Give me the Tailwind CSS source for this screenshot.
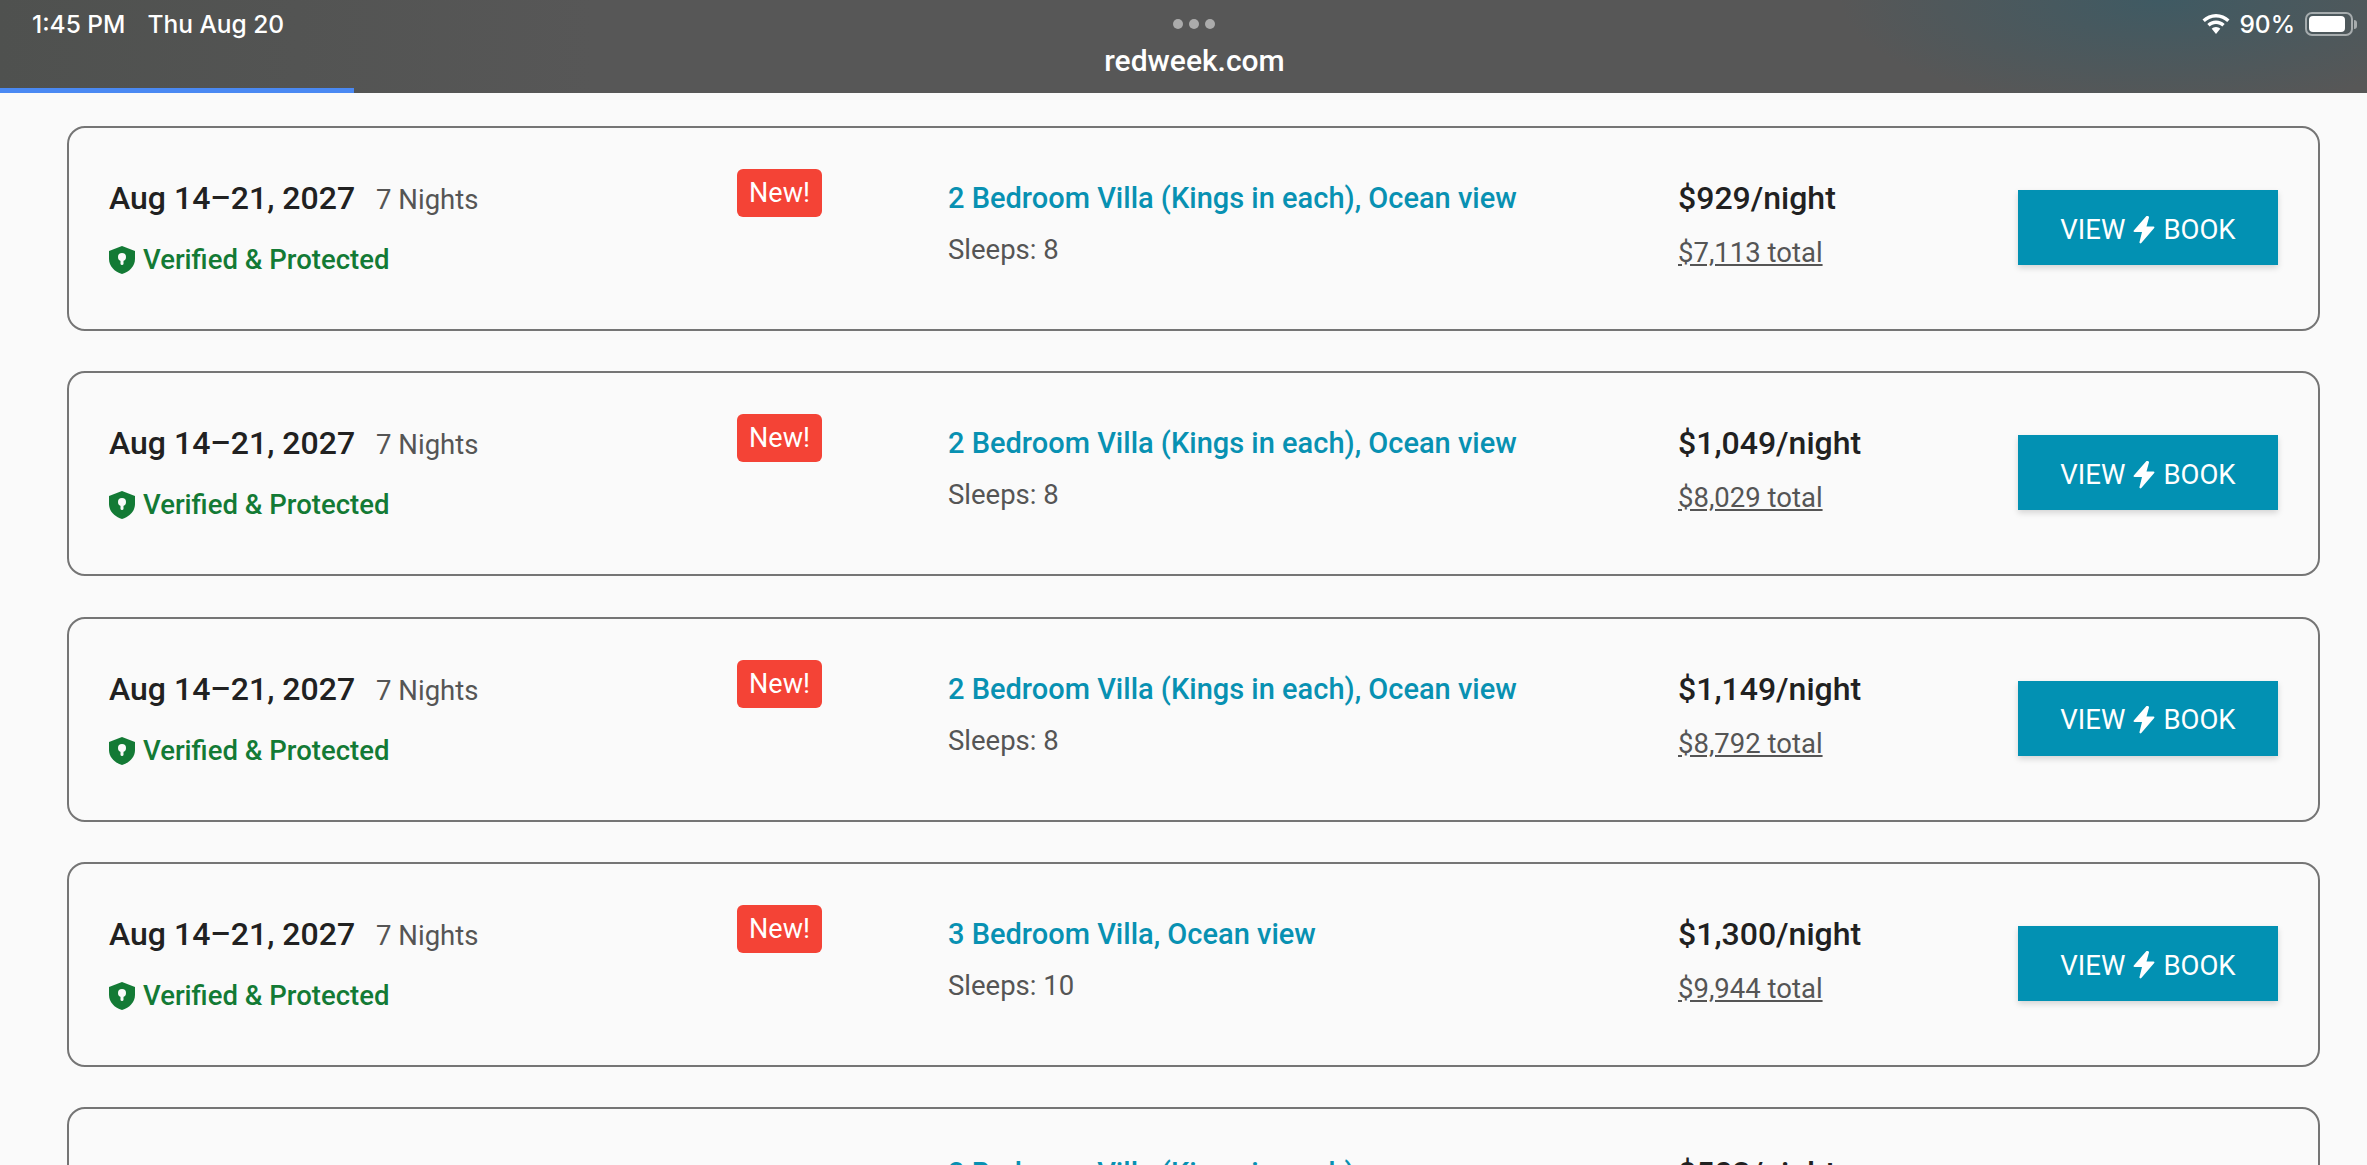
<!DOCTYPE html>
<html lang="en">
<head>
<meta charset="utf-8">
<title>redweek.com</title>
<script src="https://cdn.jsdelivr.net/npm/@tailwindcss/browser@4"></script>
</head>
<body class="m-0 bg-[#fafafa] font-['Roboto',sans-serif]">
<div class="h-[1165px] w-[2367px] overflow-hidden flex flex-col">
  <header class="relative h-[93px] shrink-0 text-white bg-[radial-gradient(ellipse_320px_110px_at_2160px_0px,#3f5a63,transparent),linear-gradient(90deg,#4f514f_0%,#575757_25%,#575757_100%)]">
    <div class="flex items-center justify-between h-[48px] pl-[32px] pr-[10px] font-['Inter',sans-serif] font-medium text-[24.500px] leading-[28px]">
      <div class="flex gap-[22px]"><span>1:45 PM</span><span>Thu Aug 20</span></div>
      <div class="flex items-center gap-[9px]">
        <svg class="w-[28px] h-[20px]" viewBox="0 0 28 20" fill="white"><path d="M14 0C8.700 0 4 2.100.5 5.500l2.300 2.500C5.700 5.100 9.600 3.400 14 3.400s8.300 1.700 11.200 4.600l2.300-2.500C24 2.100 19.300 0 14 0z"/><path d="M14 6.500c-3.400 0-6.500 1.300-8.700 3.500l2.400 2.600c1.600-1.600 3.800-2.600 6.300-2.600s4.700 1 6.300 2.600l2.400-2.600C20.500 7.800 17.400 6.500 14 6.500z"/><path d="M14 13c-1.700 0-3.200.7-4.300 1.800L14 20l4.300-5.200C17.200 13.700 15.700 13 14 13z"/></svg>
        <span class="mr-[1px]">90%</span>
        <div class="flex items-center gap-[1px]">
          <div class="w-[48px] h-[24px] rounded-[7px] border-[2px] border-white/50 p-[2px]"><div class="h-full w-[90%] rounded-[4px] bg-white"></div></div>
          <div class="w-[3px] h-[9px] rounded-r-full bg-white/50"></div>
        </div>
      </div>
    </div>
    <div class="absolute left-[1173px] top-[19px] flex gap-[6px]"><span class="size-[10px] rounded-full bg-white/50"></span><span class="size-[10px] rounded-full bg-white/50"></span><span class="size-[10px] rounded-full bg-white/50"></span></div>
    <div class="absolute left-0 right-0 top-[44px] text-center font-medium text-[30px] leading-[34px] pl-[22px]">redweek.com</div>
    <div class="absolute left-0 bottom-0 w-[354px] h-[5px] bg-[#4a89f3]"></div>
  </header>

  <main class="flex flex-col gap-[40.250px] pt-[33px] pl-[67px] pr-[47px]">

    <article class="shrink-0 h-[205px] flex rounded-[18px] border-2 border-[#757575] pl-[40px] pr-[40px]">
      <div class="w-[628px] pt-[50px]">
        <div class="flex items-baseline gap-[21px]"><span class="font-medium text-[32px] leading-[40px] text-[#212121]">Aug 14–21, 2027</span><span class="text-[27.500px] leading-[40px] text-[#555555]">7 Nights</span></div>
        <div class="flex items-center gap-[8px] mt-[21px]">
          <svg class="w-[26px] h-[28px]" viewBox="0 0 26 28"><path fill="#137a35" d="M13 0 0 5v8c0 7 5.500 12.800 13 15 7.500-2.200 13-8 13-15V5L13 0z"/><circle cx="13" cy="11" r="4" fill="#fafafa"/><rect x="11.500" y="12" width="3" height="7" rx="1.500" fill="#fafafa"/></svg>
          <span class="font-medium text-[27.500px] leading-[38px] text-[#137a35]">Verified &amp; Protected</span>
        </div>
      </div>
      <div class="w-[211px] pt-[41px]"><span class="inline-block w-[85px] h-[48px] text-center rounded-[6px] bg-[#f44336] text-white text-[27px] leading-[48px]">New!</span></div>
      <div class="w-[730px] pt-[50px]">
        <a class="block font-medium text-[29px] leading-[40px] text-[#0891b2]">2 Bedroom Villa (Kings in each), Ocean view</a>
        <p class="mt-[12px] text-[27.500px] leading-[40px] text-[#555555]">Sleeps: 8</p>
      </div>
      <div class="w-[340px] pt-[50px]">
        <p class="font-medium text-[32px] leading-[40px] text-[#212121]">$929/night</p>
        <a class="block mt-[15px] text-[27.500px] leading-[40px] text-[#555555] underline">$7,113 total</a>
      </div>
      <div class="pt-[62px]"><button class="w-[260px] h-[75px] pt-[4px] flex items-center justify-center gap-[8px] bg-[#0291b3] text-white text-[27.500px] shadow-[0_3px_6px_rgba(0,0,0,0.15)]">VIEW <svg class="w-[22px] h-[28px]" viewBox="0 0 22 28" fill="white"><path d="M13 .5.800 14.500c-.6.800-.2 1.500.8 1.500H9L6.500 26c-.3 1.300 1 1.900 1.800 1L21.200 12c.6-.8.2-1.500-.8-1.500H13.500L16 1.500c.3-1.300-2-2-3-1z"/></svg> BOOK</button></div>
    </article>

    <article class="shrink-0 h-[205px] flex rounded-[18px] border-2 border-[#757575] pl-[40px] pr-[40px]">
      <div class="w-[628px] pt-[50px]">
        <div class="flex items-baseline gap-[21px]"><span class="font-medium text-[32px] leading-[40px] text-[#212121]">Aug 14–21, 2027</span><span class="text-[27.500px] leading-[40px] text-[#555555]">7 Nights</span></div>
        <div class="flex items-center gap-[8px] mt-[21px]">
          <svg class="w-[26px] h-[28px]" viewBox="0 0 26 28"><path fill="#137a35" d="M13 0 0 5v8c0 7 5.500 12.800 13 15 7.500-2.200 13-8 13-15V5L13 0z"/><circle cx="13" cy="11" r="4" fill="#fafafa"/><rect x="11.500" y="12" width="3" height="7" rx="1.500" fill="#fafafa"/></svg>
          <span class="font-medium text-[27.500px] leading-[38px] text-[#137a35]">Verified &amp; Protected</span>
        </div>
      </div>
      <div class="w-[211px] pt-[41px]"><span class="inline-block w-[85px] h-[48px] text-center rounded-[6px] bg-[#f44336] text-white text-[27px] leading-[48px]">New!</span></div>
      <div class="w-[730px] pt-[50px]">
        <a class="block font-medium text-[29px] leading-[40px] text-[#0891b2]">2 Bedroom Villa (Kings in each), Ocean view</a>
        <p class="mt-[12px] text-[27.500px] leading-[40px] text-[#555555]">Sleeps: 8</p>
      </div>
      <div class="w-[340px] pt-[50px]">
        <p class="font-medium text-[32px] leading-[40px] text-[#212121]">$1,049/night</p>
        <a class="block mt-[15px] text-[27.500px] leading-[40px] text-[#555555] underline">$8,029 total</a>
      </div>
      <div class="pt-[62px]"><button class="w-[260px] h-[75px] pt-[4px] flex items-center justify-center gap-[8px] bg-[#0291b3] text-white text-[27.500px] shadow-[0_3px_6px_rgba(0,0,0,0.15)]">VIEW <svg class="w-[22px] h-[28px]" viewBox="0 0 22 28" fill="white"><path d="M13 .5.800 14.500c-.6.800-.2 1.500.8 1.500H9L6.500 26c-.3 1.300 1 1.900 1.800 1L21.200 12c.6-.8.2-1.500-.8-1.500H13.500L16 1.500c.3-1.300-2-2-3-1z"/></svg> BOOK</button></div>
    </article>

    <article class="shrink-0 h-[205px] flex rounded-[18px] border-2 border-[#757575] pl-[40px] pr-[40px]">
      <div class="w-[628px] pt-[50px]">
        <div class="flex items-baseline gap-[21px]"><span class="font-medium text-[32px] leading-[40px] text-[#212121]">Aug 14–21, 2027</span><span class="text-[27.500px] leading-[40px] text-[#555555]">7 Nights</span></div>
        <div class="flex items-center gap-[8px] mt-[21px]">
          <svg class="w-[26px] h-[28px]" viewBox="0 0 26 28"><path fill="#137a35" d="M13 0 0 5v8c0 7 5.500 12.800 13 15 7.500-2.200 13-8 13-15V5L13 0z"/><circle cx="13" cy="11" r="4" fill="#fafafa"/><rect x="11.500" y="12" width="3" height="7" rx="1.500" fill="#fafafa"/></svg>
          <span class="font-medium text-[27.500px] leading-[38px] text-[#137a35]">Verified &amp; Protected</span>
        </div>
      </div>
      <div class="w-[211px] pt-[41px]"><span class="inline-block w-[85px] h-[48px] text-center rounded-[6px] bg-[#f44336] text-white text-[27px] leading-[48px]">New!</span></div>
      <div class="w-[730px] pt-[50px]">
        <a class="block font-medium text-[29px] leading-[40px] text-[#0891b2]">2 Bedroom Villa (Kings in each), Ocean view</a>
        <p class="mt-[12px] text-[27.500px] leading-[40px] text-[#555555]">Sleeps: 8</p>
      </div>
      <div class="w-[340px] pt-[50px]">
        <p class="font-medium text-[32px] leading-[40px] text-[#212121]">$1,149/night</p>
        <a class="block mt-[15px] text-[27.500px] leading-[40px] text-[#555555] underline">$8,792 total</a>
      </div>
      <div class="pt-[62px]"><button class="w-[260px] h-[75px] pt-[4px] flex items-center justify-center gap-[8px] bg-[#0291b3] text-white text-[27.500px] shadow-[0_3px_6px_rgba(0,0,0,0.15)]">VIEW <svg class="w-[22px] h-[28px]" viewBox="0 0 22 28" fill="white"><path d="M13 .5.800 14.500c-.6.800-.2 1.500.8 1.500H9L6.500 26c-.3 1.300 1 1.900 1.800 1L21.200 12c.6-.8.2-1.500-.8-1.500H13.500L16 1.500c.3-1.300-2-2-3-1z"/></svg> BOOK</button></div>
    </article>

    <article class="shrink-0 h-[205px] flex rounded-[18px] border-2 border-[#757575] pl-[40px] pr-[40px]">
      <div class="w-[628px] pt-[50px]">
        <div class="flex items-baseline gap-[21px]"><span class="font-medium text-[32px] leading-[40px] text-[#212121]">Aug 14–21, 2027</span><span class="text-[27.500px] leading-[40px] text-[#555555]">7 Nights</span></div>
        <div class="flex items-center gap-[8px] mt-[21px]">
          <svg class="w-[26px] h-[28px]" viewBox="0 0 26 28"><path fill="#137a35" d="M13 0 0 5v8c0 7 5.500 12.800 13 15 7.500-2.200 13-8 13-15V5L13 0z"/><circle cx="13" cy="11" r="4" fill="#fafafa"/><rect x="11.500" y="12" width="3" height="7" rx="1.500" fill="#fafafa"/></svg>
          <span class="font-medium text-[27.500px] leading-[38px] text-[#137a35]">Verified &amp; Protected</span>
        </div>
      </div>
      <div class="w-[211px] pt-[41px]"><span class="inline-block w-[85px] h-[48px] text-center rounded-[6px] bg-[#f44336] text-white text-[27px] leading-[48px]">New!</span></div>
      <div class="w-[730px] pt-[50px]">
        <a class="block font-medium text-[29px] leading-[40px] text-[#0891b2]">3 Bedroom Villa, Ocean view</a>
        <p class="mt-[12px] text-[27.500px] leading-[40px] text-[#555555]">Sleeps: 10</p>
      </div>
      <div class="w-[340px] pt-[50px]">
        <p class="font-medium text-[32px] leading-[40px] text-[#212121]">$1,300/night</p>
        <a class="block mt-[15px] text-[27.500px] leading-[40px] text-[#555555] underline">$9,944 total</a>
      </div>
      <div class="pt-[62px]"><button class="w-[260px] h-[75px] pt-[4px] flex items-center justify-center gap-[8px] bg-[#0291b3] text-white text-[27.500px] shadow-[0_3px_6px_rgba(0,0,0,0.15)]">VIEW <svg class="w-[22px] h-[28px]" viewBox="0 0 22 28" fill="white"><path d="M13 .5.800 14.500c-.6.800-.2 1.500.8 1.500H9L6.500 26c-.3 1.300 1 1.900 1.800 1L21.200 12c.6-.8.2-1.500-.8-1.500H13.500L16 1.500c.3-1.300-2-2-3-1z"/></svg> BOOK</button></div>
    </article>

    <article class="shrink-0 h-[205px] flex rounded-[18px] border-2 border-[#757575] pl-[40px] pr-[40px]">
      <div class="w-[628px]"></div>
      <div class="w-[211px]"></div>
      <div class="w-[730px] pt-[44px]">
        <a class="block font-medium text-[29px] leading-[40px] text-[#0891b2]">2 Bedroom Villa (Kings in each)</a>
      </div>
      <div class="w-[340px] pt-[44px]">
        <p class="font-medium text-[32px] leading-[40px] text-[#212121]">$503/night</p>
      </div>
      <div class="pt-[56px]"><div class="w-[260px] h-[75px] bg-[#0291b3]"></div></div>
    </article>

  </main>
</div>
</body>
</html>
